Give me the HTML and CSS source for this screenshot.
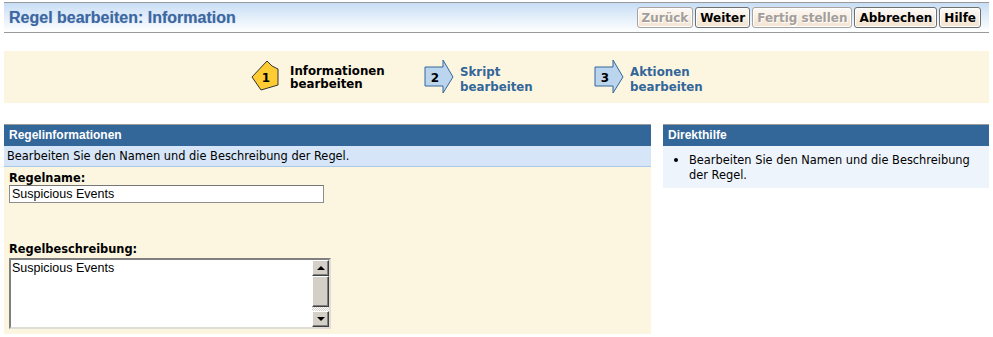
FILE: index.html
```html
<!DOCTYPE html>
<html lang="de">
<head>
    <meta charset="UTF-8">
    <title>Regel bearbeiten: Information</title>
    <link rel="stylesheet" href="styles.css">
</head>
<body>
    <!-- Header -->
    <header class="titlebar">
        <h1>Regel bearbeiten: Information</h1>
        <div class="buttons">
            <button class="btn" disabled>Zurück</button>
            <button class="btn">Weiter</button>
            <button class="btn" disabled>Fertig stellen</button>
            <button class="btn">Abbrechen</button>
            <button class="btn">Hilfe</button>
        </div>
    </header>

    <!-- Wizard steps -->
    <div class="steps">
        <div class="step current">
            <div class="step-icon">
                <svg width="30" height="34" viewBox="0 0 30 34">
                    <polygon points="1,17 16,1 21,6 27,9 27,25 10,30" fill="#ffcc33" stroke="#333" stroke-width="1"/>
                    <text x="15" y="22" text-anchor="middle">1</text>
                </svg>
            </div>
            <span>Informationen<br>bearbeiten</span>
        </div>
        <div class="step">
            <div class="step-icon">
                <svg width="31" height="36" viewBox="0 0 31 36">
                    <polygon points="1,8 19,8 19,1 29,18 19,34 19,27 1,27" fill="#bcd5ee" stroke="#336699" stroke-width="1"/>
                    <text x="11" y="23" text-anchor="middle">2</text>
                </svg>
            </div>
            <span>Skript<br>bearbeiten</span>
        </div>
        <div class="step">
            <div class="step-icon">
                <svg width="31" height="36" viewBox="0 0 31 36">
                    <polygon points="1,8 19,8 19,1 29,18 19,34 19,27 1,27" fill="#bcd5ee" stroke="#336699" stroke-width="1"/>
                    <text x="11" y="23" text-anchor="middle">3</text>
                </svg>
            </div>
            <span>Aktionen<br>bearbeiten</span>
        </div>
    </div>

    <!-- Main Content -->
    <main>
        <section class="panel form-panel">
            <h2>Regelinformationen</h2>
            <p class="intro">Bearbeiten Sie den Namen und die Beschreibung der Regel.</p>
            <div class="fields">
                <label for="rulename">Regelname:</label>
                <input id="rulename" type="text" value="Suspicious Events">
                <label for="ruledesc" class="desc-label">Regelbeschreibung:</label>
                <div class="textarea">
                    <textarea id="ruledesc">Suspicious Events</textarea>
                    <div class="scrollbar">
                        <span class="arrow up"></span>
                        <span class="thumb"></span>
                        <span class="track"></span>
                        <span class="arrow down"></span>
                    </div>
                </div>
            </div>
        </section>

        <section class="panel help-panel">
            <h2>Direkthilfe</h2>
            <ul>
                <li>Bearbeiten Sie den Namen und die Beschreibung der Regel.</li>
            </ul>
        </section>
    </main>
</body>
</html>
```

FILE: styles.css
```css
/* Reset styles */
* {
    margin: 0;
    padding: 0;
    box-sizing: border-box;
}

body {
    background: #fff;
    font-family: "DejaVu Sans", Verdana, sans-serif;
    font-size: 11.4px;
    color: #000;
    padding: 2px 4px 0 4px;
}

/* Header */
.titlebar {
    display: flex;
    justify-content: space-between;
    align-items: center;
    height: 31px;
    border-top: 1px solid #9a9a9a;
    border-bottom: 1px solid #9a9a9a;
    background: linear-gradient(#c8def5, #ffffff);
    padding: 0 8px 0 5px;
}

.titlebar h1 {
    font-family: "Liberation Sans", Arial, sans-serif;
    font-size: 16px;
    font-weight: bold;
    color: #3d67a1;
    text-shadow: 0 0 1px #9cb6d8;
}

.buttons {
    display: flex;
    gap: 2px;
}

.btn {
    font-family: "DejaVu Sans", Verdana, sans-serif;
    font-size: 12px;
    font-weight: bold;
    color: #000;
    height: 21px;
    padding: 0 4px;
    border: 1px solid #6f6f6f;
    border-radius: 3px;
    background: linear-gradient(#fdfaf6, #f3e2cf);
    box-shadow: inset 0 0 0 1px #fff;
}

.btn:disabled {
    color: #a39e99;
    text-shadow: 1px 1px 0 #fff;
    border-color: #a8a39e;
}

/* Wizard steps */
.steps {
    display: flex;
    justify-content: center;
    align-items: center;
    height: 52px;
    margin-top: 18px;
    background: #fcf6e0;
    padding-left: 19px;
}

.step {
    display: flex;
    align-items: center;
    width: 170px;
    font-size: 11.8px;
    font-weight: bold;
    color: #336699;
    line-height: 15px;
}

.step.current {
    color: #000;
    line-height: 13px;
}

.step-icon {
    width: 39px;
    flex: none;
    display: flex;
    justify-content: flex-end;
    padding-right: 5px;
}

.step.current .step-icon {
    justify-content: flex-start;
}

.step svg text {
    font-family: "DejaVu Sans", Verdana, sans-serif;
    font-size: 12px;
    font-weight: bold;
    fill: #000;
}

.step span {
    margin-top: 5px;
}

.step.current span {
    margin-top: 2px;
}

/* Main content */
main {
    display: flex;
    align-items: flex-start;
    gap: 12px;
    margin-top: 21px;
}

.panel h2 {
    font-family: "Liberation Sans", Arial, sans-serif;
    font-size: 12px;
    font-weight: bold;
    color: #fff;
    background: #336699;
    border-top: 1px solid #9a9a9a;
    height: 22px;
    line-height: 21px;
    padding-left: 5px;
}

.form-panel {
    width: 647px;
    background: #fcf6e0;
}

.intro {
    background: #d6e6f8;
    border-bottom: 1px solid #a9c8ea;
    height: 21px;
    line-height: 20px;
    padding-left: 3px;
}

.fields {
    display: flex;
    flex-direction: column;
    align-items: flex-start;
    padding: 5px;
}

.fields label {
    font-weight: bold;
    line-height: 13px;
}

.fields .desc-label {
    margin-top: 40px;
}

#rulename {
    width: 315px;
    height: 18px;
    border: 1px solid #8d8d8d;
    border-top-color: #777;
    font-family: "Liberation Sans", Arial, sans-serif;
    font-size: 12.5px;
    padding: 0 2px;
    background: #fff;
}

.textarea {
    display: flex;
    width: 322px;
    height: 71px;
    margin-top: 2px;
    border: 2px solid #808080;
    border-right-color: #e0ddd6;
    border-bottom-color: #e0ddd6;
    background: #fff;
}

.textarea textarea {
    flex: 1;
    border: none;
    resize: none;
    font-family: "Liberation Sans", Arial, sans-serif;
    font-size: 12.5px;
    padding: 1px;
    overflow: hidden;
}

.scrollbar {
    width: 17px;
    display: flex;
    flex-direction: column;
}

.scrollbar .arrow,
.scrollbar .thumb {
    background: #d4d0c8;
    border: 1px solid;
    border-color: #fff #404040 #404040 #fff;
    box-shadow: inset -1px -1px 0 #808080;
    display: flex;
    justify-content: center;
    align-items: center;
}

.scrollbar .arrow {
    height: 16px;
}

.scrollbar .thumb {
    height: 31px;
}

.scrollbar .track {
    flex: 1;
    background: repeating-conic-gradient(#fff 0 25%, #d4d0c8 0 50%) 0 0 / 2px 2px;
}

.scrollbar .arrow::after {
    content: "";
    border-left: 4px solid transparent;
    border-right: 4px solid transparent;
}

.scrollbar .up::after {
    border-bottom: 4px solid #000;
}

.scrollbar .down::after {
    border-top: 4px solid #000;
}

.help-panel {
    flex: 1;
}

.help-panel ul {
    background: #eef4fc;
    padding: 6px 10px 5px 26px;
    line-height: 15px;
}

.help-panel li::marker {
    font-size: 14px;
}
```
